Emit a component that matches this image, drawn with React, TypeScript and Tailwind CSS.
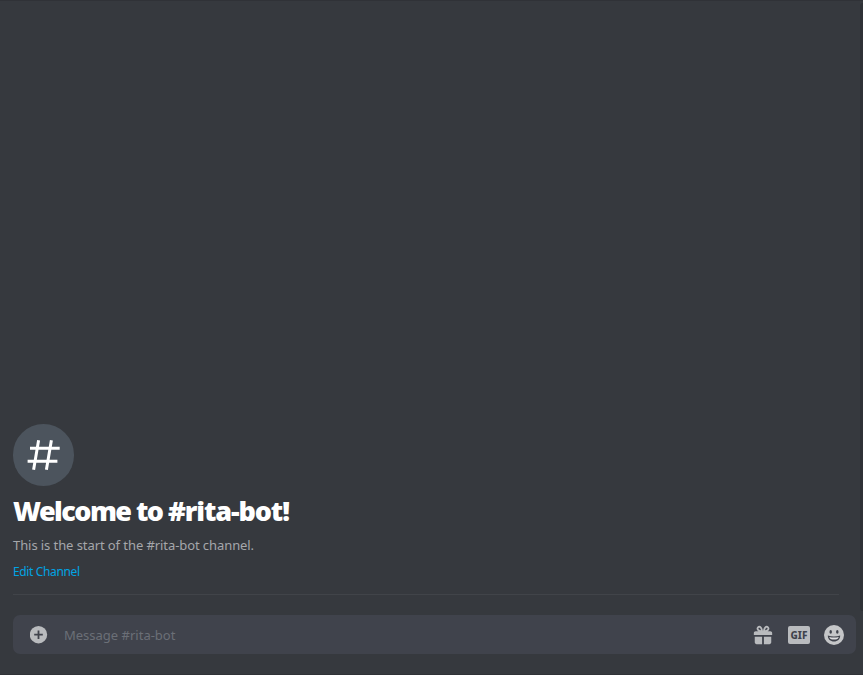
function HashIcon() {
  return (
    <svg viewBox="0 0 34 32" className="mr-0.5 h-8 w-[34px]" fill="none" stroke="white" strokeWidth="3">
      <path d="M12.6 1.2 L7.6 30.7 M25.4 1.2 L20.4 30.7 M4 9.3 H33.7 M1.6 22.3 H31.4" />
    </svg>
  );
}

function PlusIcon() {
  return (
    <svg viewBox="0 0 18 18" className="h-[18px] w-[18px]">
      <circle cx="8.5" cy="8.7" r="8.7" fill="#b9bbbe" />
      <path d="M8.5 4.4V13M4.2 8.7H12.8" stroke="#40434c" strokeWidth="1.8" />
    </svg>
  );
}

function GiftIcon() {
  return (
    <svg viewBox="0 0 24 24" className="h-[22px] w-[22px]" fill="#b9bbbe">
      <path
        fillRule="evenodd"
        d="M16.886 8H20C21.104 8 22 8.896 22 10V12H2V10C2 8.896 2.897 8 4 8H7.114C6.663 7.764 6.236 7.477 5.879 7.121C4.709 5.951 4.709 4.048 5.879 2.879C7.012 1.746 8.986 1.746 10.121 2.877C11.758 4.514 11.979 7.595 12 8C12.021 7.595 12.242 4.514 13.879 2.877C15.014 1.746 16.988 1.746 18.121 2.879C19.291 4.048 19.291 5.951 18.121 7.121C17.764 7.477 17.337 7.764 16.886 8ZM7.293 5.707C6.903 5.316 6.903 4.682 7.293 4.292C7.481 4.103 7.732 4 8 4C8.268 4 8.519 4.103 8.707 4.292C9.297 4.882 9.641 5.94 9.825 6.822C8.945 6.639 7.879 6.293 7.293 5.707ZM14.174 6.824C14.359 5.941 14.702 4.883 15.293 4.293C15.481 4.103 15.732 4 16 4C16.268 4 16.519 4.103 16.706 4.291C17.096 4.682 17.097 5.316 16.707 5.707C16.116 6.298 15.057 6.642 14.174 6.824ZM3 14V20C3 21.103 3.897 22 5 22H11V14H3ZM13 14V22H19C20.104 22 21 21.103 21 20V14H13Z"
      />
    </svg>
  );
}

function SmileIcon() {
  return (
    <svg viewBox="0 0 20 20" className="h-5 w-5">
      <circle cx="10" cy="10" r="10" fill="#c5c6c8" />
      <ellipse cx="6.7" cy="6.9" rx="1.25" ry="1.8" fill="#40434c" />
      <ellipse cx="13.3" cy="6.9" rx="1.25" ry="1.8" fill="#40434c" />
      <path d="M3.8 10.6Q10 12.5 16.2 10.6C16.2 14.3 13.5 16.6 10 16.6S3.8 14.3 3.8 10.6Z" fill="#40434c" />
      <path d="M5.2 12.1Q10 13.1 14.8 12.1Q14.2 14 12.8 14.3Q10 14.8 7.2 14.3Q5.8 14 5.2 12.1Z" fill="#dddddf" />
    </svg>
  );
}

export default function App() {
  return (
    <div className="flex h-[675px] w-[863px] flex-col overflow-hidden border-y border-[#303237] bg-[#36393e] font-['Noto_Sans',sans-serif]">
      <div className="flex h-[610px] shrink-0">
        <main className="flex flex-1 flex-col pl-[13px] pr-[21px] pt-[423px]">
          <div className="flex h-[62px] w-[61px] shrink-0 items-center justify-center rounded-full bg-[#4c545d]">
            <HashIcon />
          </div>
          <h1 className="mt-[7px] h-9 whitespace-nowrap text-[27px] font-black leading-9 tracking-[-1.3px] text-white">
            <span className="tracking-[-1.55px]">Welcome to </span>
            <span className="tracking-[-1.1px]">#rita-bot!</span>
          </h1>
          <p className="mt-1.5 h-5 whitespace-nowrap text-[13px] leading-5 tracking-[-0.08px] text-[#a5a7ab]">
            This is the start of the #rita-bot channel.
          </p>
          <a className="mt-2 h-[18px] whitespace-nowrap text-[12px] leading-[18px] tracking-[-0.36px] text-[#00a4e4]">
            Edit Channel
          </a>
          <div className="mt-[13px] h-px shrink-0 bg-[#414449]" />
        </main>
        <div className="mt-0.5 w-[3px] rounded-l-full bg-[#2e3136]" />
      </div>
      <div className="ml-[13px] mr-[7px] mt-1 flex h-[39px] shrink-0 items-center rounded-[7px] bg-[#40434c] pl-[17px] pr-[12px]">
        <PlusIcon />
        <span className="ml-4 flex-1 whitespace-nowrap text-[13px] leading-5 text-[#6b6f77]">Message #rita-bot</span>
        <GiftIcon />
        <div className="ml-[14px] flex h-[18px] w-[22px] items-center justify-center rounded-[2px] bg-[#b9bbbe] text-[10px] font-extrabold leading-none text-[#40434c]">
          GIF
        </div>
        <div className="ml-[14px]">
          <SmileIcon />
        </div>
      </div>
    </div>
  );
}
